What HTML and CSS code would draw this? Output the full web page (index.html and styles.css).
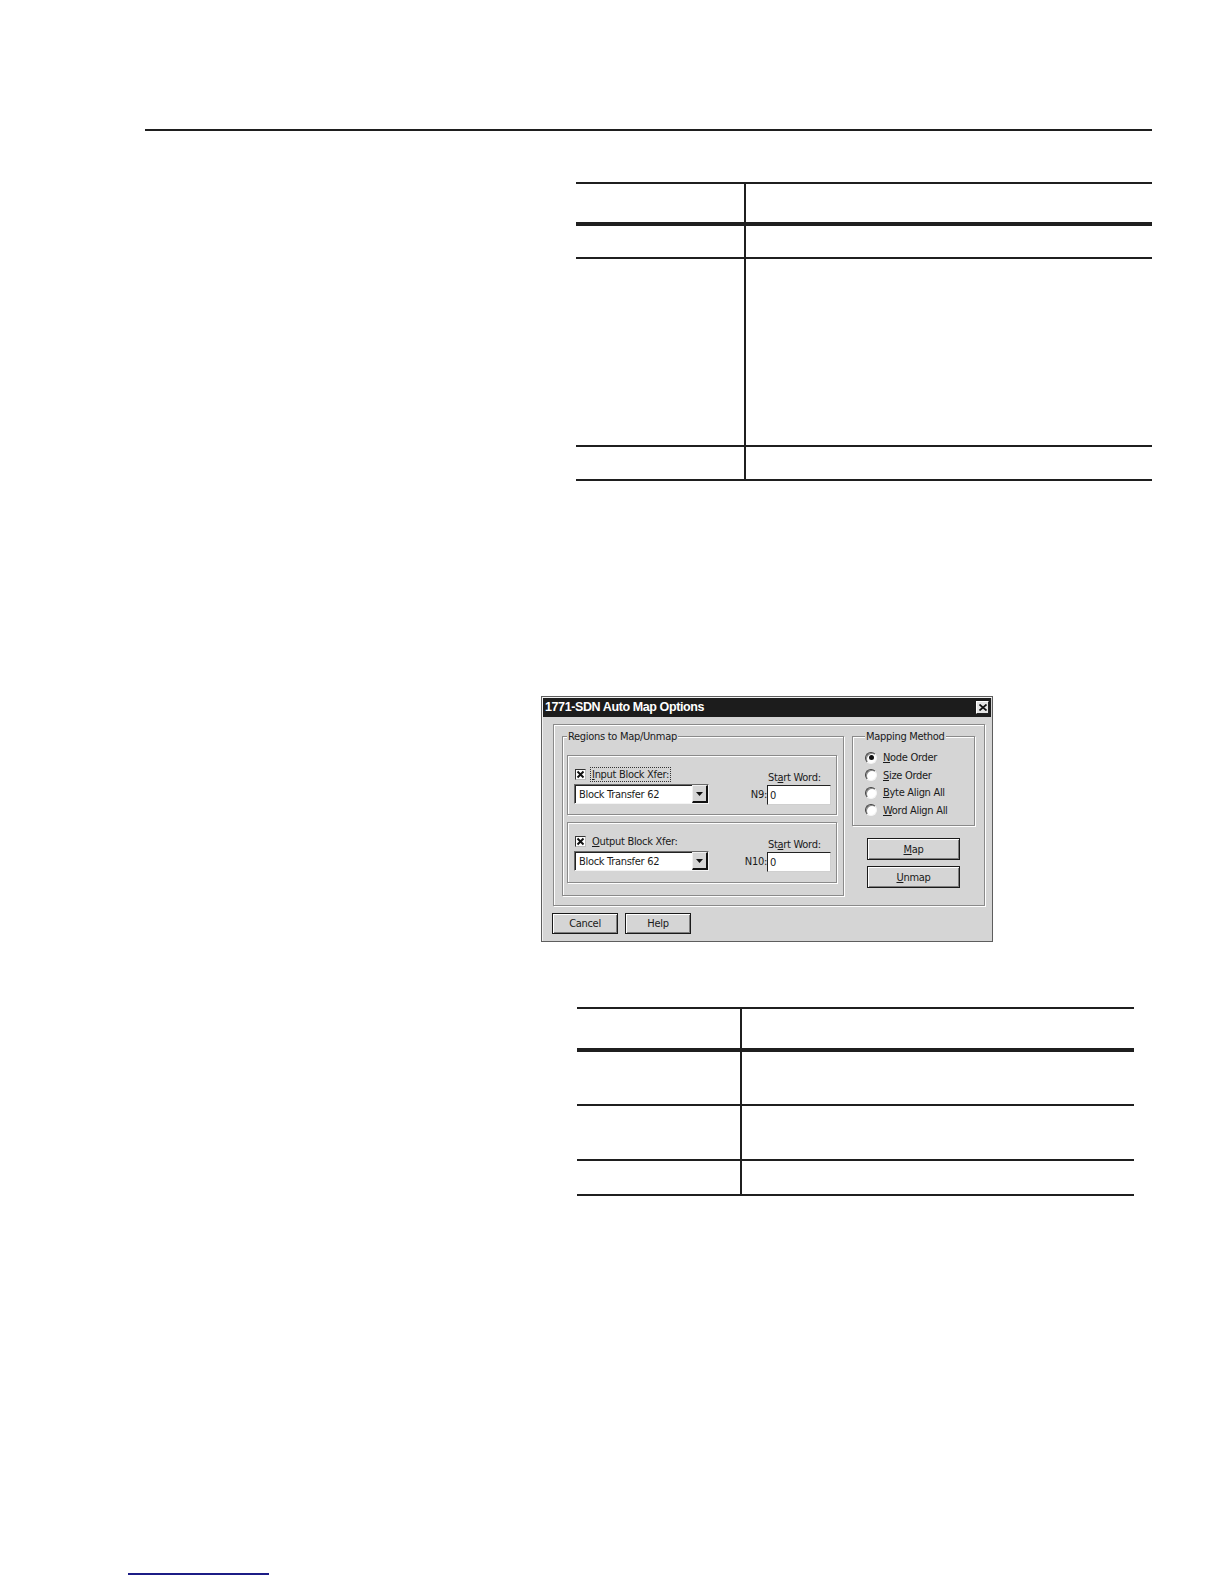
FILE: index.html
```html
<!DOCTYPE html>
<html>
<head>
<meta charset="utf-8">
<title>1771-SDN Auto Map Options</title>
<link rel="stylesheet" href="styles.css">
</head>
<body>
<div class="page">
  <div class="top-rule"></div>

  <div class="content">
    <div class="tbl tbl1">
      <div class="row head"><div class="c1"></div><div class="c2"></div></div>
      <div class="row r2"><div class="c1"></div><div class="c2"></div></div>
      <div class="row r3"><div class="c1"></div><div class="c2"></div></div>
      <div class="row r4"><div class="c1"></div><div class="c2"></div></div>
    </div>

    <div class="dlg">
      <div class="titlebar">
        <span class="title">1771-SDN Auto Map Options</span>
        <span class="close">
          <svg width="8" height="7" viewBox="0 0 8 7"><path d="M0.5 0.5 L7.5 6.5 M7.5 0.5 L0.5 6.5" stroke="#111" stroke-width="1.7" fill="none"/></svg>
        </span>
      </div>

      <div class="frame">
        <fieldset class="grp regions">
          <legend>Regions to Map/Unmap</legend>

          <div class="xbox">
            <div class="xcol">
              <div class="chkline">
                <span class="chk"><svg width="9" height="9" viewBox="0 0 9 9"><path d="M1.5 1.5 L7.5 7.5 M7.5 1.5 L1.5 7.5" stroke="#111" stroke-width="1.9" fill="none"/></svg></span>
                <span class="focus"><u>I</u>nput Block Xfer:</span>
              </div>
              <div class="combo"><span class="combo-text">Block Transfer 62</span><span class="dd"><svg width="7" height="4" viewBox="0 0 7 4"><path d="M0 0 H7 L3.5 4 Z" fill="#111"/></svg></span></div>
            </div>
            <div class="swgrid">
              <span class="swlabel">St<u>a</u>rt Word:</span>
              <span class="nlabel">N9:</span>
              <span class="field">0</span>
            </div>
          </div>

          <div class="xbox xbox2">
            <div class="xcol">
              <div class="chkline">
                <span class="chk"><svg width="9" height="9" viewBox="0 0 9 9"><path d="M1.5 1.5 L7.5 7.5 M7.5 1.5 L1.5 7.5" stroke="#111" stroke-width="1.9" fill="none"/></svg></span>
                <span class="plain"><u>O</u>utput Block Xfer:</span>
              </div>
              <div class="combo"><span class="combo-text">Block Transfer 62</span><span class="dd"><svg width="7" height="4" viewBox="0 0 7 4"><path d="M0 0 H7 L3.5 4 Z" fill="#111"/></svg></span></div>
            </div>
            <div class="swgrid">
              <span class="swlabel">St<u>a</u>rt Word:</span>
              <span class="nlabel">N10:</span>
              <span class="field">0</span>
            </div>
          </div>
        </fieldset>

        <div class="rcol">
          <fieldset class="grp mapping">
            <legend>Mapping Method</legend>
            <div class="radio"><span class="rb on"></span><span><u>N</u>ode Order</span></div>
            <div class="radio"><span class="rb"></span><span><u>S</u>ize Order</span></div>
            <div class="radio"><span class="rb"></span><span><u>B</u>yte Align All</span></div>
            <div class="radio"><span class="rb"></span><span><u>W</u>ord Align All</span></div>
          </fieldset>
          <button class="btn wide first"><u>M</u>ap</button>
          <button class="btn wide"><u>U</u>nmap</button>
        </div>
      </div>

      <div class="btnrow">
        <button class="btn small">Cancel</button>
        <button class="btn small">Help</button>
      </div>
    </div>

    <div class="tbl tbl2">
      <div class="row head"><div class="c1"></div><div class="c2"></div></div>
      <div class="row r2"><div class="c1"></div><div class="c2"></div></div>
      <div class="row r3"><div class="c1"></div><div class="c2"></div></div>
      <div class="row r4"><div class="c1"></div><div class="c2"></div></div>
    </div>
  </div>

  <div class="foot-rule"></div>
</div>
</body>
</html>
```

FILE: styles.css
```css
* { box-sizing: border-box; }

body {
  margin: 0;
  background: #ffffff;
  font-family: "Liberation Sans", Arial, sans-serif;
}

.page {
  width: 1224px;
  height: 1584px;
  overflow: hidden;
  padding-top: 129px;
}

.top-rule {
  margin-left: 145px;
  width: 1007px;
  height: 2px;
  background: #1f1f1f;
}

.content {
  margin-left: 541px;
  width: 611px;
}

/* ---------- ruled tables ---------- */
.tbl {
  border-top: 2px solid #1f1f1f;
}
.row {
  display: flex;
  border-bottom: 2px solid #1f1f1f;
}
.row.head { border-bottom-width: 4px; }
.c1 { border-right: 2px solid #1f1f1f; }
.c2 { flex: 1; }

.tbl1 {
  margin-top: 51px;
  margin-left: 35px;
  width: 576px;
}
.tbl1 .c1 { width: 170px; }
.tbl1 .head { height: 42px; }
.tbl1 .r2 { height: 33px; }
.tbl1 .r3 { height: 188px; }
.tbl1 .r4 { height: 34px; }

.tbl2 {
  margin-top: 65px;
  margin-left: 36px;
  width: 557px;
}
.tbl2 .c1 { width: 165px; }
.tbl2 .head { height: 43px; }
.tbl2 .r2 { height: 54px; }
.tbl2 .r3 { height: 55px; }
.tbl2 .r4 { height: 35px; }

.foot-rule {
  margin-top: 377px;
  margin-left: 128px;
  width: 141px;
  height: 2px;
  background: #1c1c86;
}

/* ---------- dialog ---------- */
.dlg {
  margin-top: 215px;
  width: 452px;
  height: 246px;
  background: #d5d5d5;
  border: 1px solid #5e5e5e;
  padding: 1px;
  box-shadow: inset 1px 1px 0 #f2f2f2;
  font-family: "DejaVu Sans Condensed", "DejaVu Sans", sans-serif;
  font-stretch: condensed;
  font-size: 11px;
  letter-spacing: -0.3px;
  line-height: 13px;
  color: #1a1a1a;
}

.titlebar {
  height: 19px;
  background: #1c1c1c;
  color: #ffffff;
  display: flex;
  align-items: center;
  justify-content: space-between;
  padding: 0 2px 0 2px;
}
.title {
  font-family: "Liberation Sans", Arial, sans-serif;
  font-stretch: normal;
  font-weight: bold;
  font-size: 12.5px;
  letter-spacing: -0.4px;
}
.close {
  width: 13px;
  height: 13px;
  background: #e4e4e4;
  border: 1px solid;
  border-color: #ffffff #222222 #222222 #ffffff;
  display: flex;
  align-items: center;
  justify-content: center;
}

.frame {
  margin: 7px 0 0 10px;
  width: 432px;
  height: 182px;
  border: 1px solid #8a8a8a;
  box-shadow: 1px 1px 0 #ffffff, inset 1px 1px 0 #ffffff;
  display: flex;
  align-items: flex-start;
  gap: 8px;
  padding: 5px 9px 0 8px;
}

.grp {
  margin: 0;
  min-width: 0;
  border: 1px solid #8a8a8a;
  box-shadow: 1px 1px 0 #ffffff, inset 1px 1px 0 #ffffff;
}
.grp legend {
  padding: 0 1px;
  margin-left: 0;
  background: #d5d5d5;
  line-height: 13px;
}

.regions {
  width: 282px;
  height: 166px;
  padding: 12px 0 0 4px;
}

.xbox {
  width: 270px;
  height: 60px;
  border: 1px solid #8a8a8a;
  box-shadow: 1px 1px 0 #ffffff, inset 1px 1px 0 #ffffff;
  padding: 12px 5px 0 6px;
  display: flex;
  justify-content: space-between;
  align-items: flex-start;
}
.xbox2 {
  margin-top: 7px;
  height: 61px;
}

.xcol {
  display: flex;
  flex-direction: column;
}
.chkline {
  display: flex;
  align-items: center;
  height: 13px;
  gap: 5px;
  margin-left: 1px;
}
.chk {
  width: 11px;
  height: 11px;
  background: #ffffff;
  border: 1px solid;
  border-color: #333333 #bdbdbd #bdbdbd #333333;
  display: flex;
  align-items: center;
  justify-content: center;
}
.focus {
  outline: 1px dotted #333333;
  padding: 0 1px;
}
.plain { padding: 0 1px; }

.combo {
  margin-top: 3px;
  width: 135px;
  height: 20px;
  background: #ffffff;
  border: 1px solid;
  border-color: #6a6a6a #f4f4f4 #f4f4f4 #6a6a6a;
  box-shadow: inset 1px 1px 0 #222222;
  display: flex;
  align-items: center;
  justify-content: space-between;
  padding-left: 4px;
}
.dd {
  width: 16px;
  height: 18px;
  background: #d5d5d5;
  border: 1px solid;
  border-color: #f0f0f0 #111111 #111111 #f0f0f0;
  border-width: 1px 2px 2px 1px;
  display: flex;
  align-items: center;
  justify-content: center;
}

.swgrid {
  display: grid;
  grid-template-columns: auto 64px;
  align-items: end;
  margin-top: 3px;
}
.swlabel {
  grid-column: 2;
  padding-left: 1px;
  white-space: nowrap;
}
.nlabel {
  grid-column: 1;
  grid-row: 2;
  text-align: right;
  align-self: center;
}
.field {
  grid-column: 2;
  grid-row: 2;
  margin-top: 1px;
  height: 20px;
  background: #ffffff;
  border: 1px solid;
  border-color: #222222 #cfcfcf #cfcfcf #222222;
  padding: 3px 0 0 2px;
}

.rcol {
  width: 123px;
  display: flex;
  flex-direction: column;
}
.mapping {
  width: 123px;
  height: 96px;
  padding: 6px 0 0 12px;
}
.radio {
  display: flex;
  align-items: center;
  gap: 6px;
  height: 17.5px;
}
.rb {
  width: 12px;
  height: 12px;
  border-radius: 50%;
  background: #ffffff;
  border: 1px solid;
  border-color: #404040 #f4f4f4 #f4f4f4 #404040;
  box-shadow: inset 1px 1px 0 #8a8a8a;
  display: flex;
  align-items: center;
  justify-content: center;
}
.rb.on::after {
  content: "";
  width: 5px;
  height: 5px;
  border-radius: 50%;
  background: #111111;
}

.btn {
  font: inherit;
  color: inherit;
  letter-spacing: inherit;
  margin: 0;
  padding: 0;
  background: #d5d5d5;
  border: 1px solid #1a1a1a;
  box-shadow: inset 1px 1px 0 #ffffff, inset -1px -1px 0 #7e7e7e;
  display: flex;
  align-items: center;
  justify-content: center;
}
.btn.wide {
  width: 93px;
  height: 22px;
  margin-left: 15px;
  margin-top: 6px;
}
.btn.wide.first { margin-top: 12px; }

.btnrow {
  display: flex;
  gap: 7px;
  margin: 7px 0 0 9px;
}
.btn.small {
  width: 66px;
  height: 21px;
}
```
